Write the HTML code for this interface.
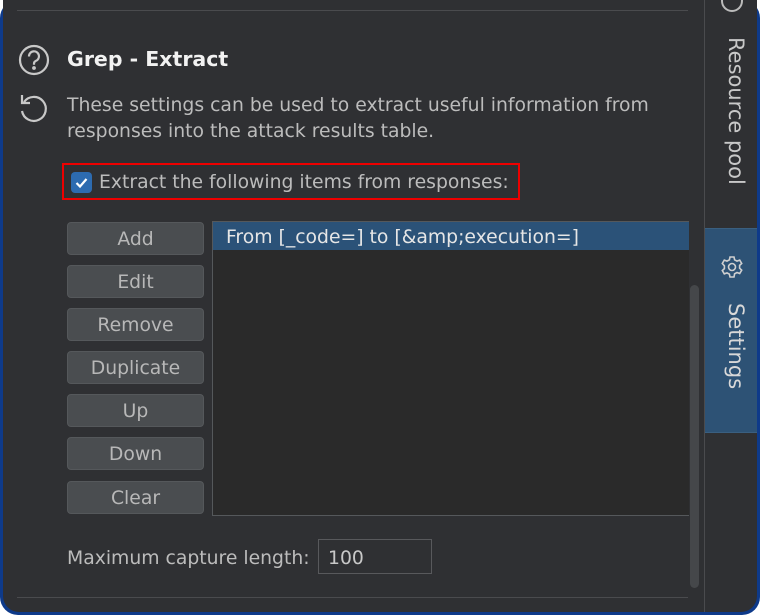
<!DOCTYPE html>
<html><head><style>
*{margin:0;padding:0;box-sizing:border-box}
body{width:760px;height:615px;background:#fff;overflow:hidden;font-family:"DejaVu Sans","Liberation Sans",sans-serif}
.frame{position:absolute;left:0;top:0;width:760px;height:615px;background:#0e3a8a;border-radius:18px}
.in{position:absolute;left:3px;top:0;width:754px;height:612px;background:#2f3033;border-radius:0 0 16px 16px;overflow:hidden}
.t{position:absolute;color:#bcbcbc;font-size:18.8px;white-space:nowrap}
.btn{position:absolute;left:64px;width:137px;height:33px;background:#4a4d50;border:1px solid #55585b;border-radius:4px;color:#b8b8b8;font-size:18.8px;text-align:center;line-height:33px}
</style></head><body>
<div class="frame"><div class="in">
<div style="position:absolute;left:14px;top:10px;width:671px;height:1px;background:#4a4b4e"></div>
<div style="position:absolute;left:14px;top:597px;width:671px;height:1px;background:#4a4b4e"></div>
<div style="position:absolute;left:701px;top:0;width:1px;height:612px;background:#4a4b4e"></div>
<div style="position:absolute;left:702px;top:228px;width:52px;height:205px;background:#2d5275;border-top:1px solid #3a5f80;border-bottom:1px solid #3a5f80"></div>
<div style="position:absolute;left:687px;top:285px;width:9px;height:303px;background:#45474a;border-radius:5px"></div>
<svg style="position:absolute;left:13px;top:43px" width="36" height="36" viewBox="0 0 36 36" fill="none" stroke="#c8c8c8" stroke-width="2.2"><circle cx="18" cy="17" r="14"/><path d="M13 13.5a5 5 0 1 1 6.5 4.6c-1.2.5-1.5 1.2-1.5 2.6v1"/><circle cx="18" cy="25" r="0.8" fill="#c8c8c8"/></svg>
<svg style="position:absolute;left:13px;top:91px" width="36" height="36" viewBox="0 0 36 36" fill="none" stroke="#c8c8c8" stroke-width="2.2"><path d="M8 11a12 12 0 1 1-2 9"/><path d="M6 4v8h8"/></svg>
<div class="t" style="left:64px;top:47px;color:#f2f2f2;font-weight:bold;font-size:20.5px">Grep - Extract</div>
<div class="t" style="left:64px;top:93px;line-height:26px">These settings can be used to extract useful information from<br>responses into the attack results table.</div>
<div style="position:absolute;left:59px;top:163px;width:458px;height:37px;border:2px solid #e00"></div>
<div style="position:absolute;left:68px;top:172px;width:21px;height:21px;background:#2d6bb0;border-radius:4px"></div>
<svg style="position:absolute;left:68px;top:172px" width="21" height="21" viewBox="0 0 21 21"><path d="M5.5 11l3.5 3.5 6.5-7.5" stroke="#fff" stroke-width="2.2" fill="none"/></svg>
<div class="t" style="left:96px;top:172px">Extract the following items from responses:</div>
<div style="position:absolute;left:209px;top:221px;width:477px;height:295px;background:#2a2a2a;border:1px solid #55585b;border-right:none"></div>
<div style="position:absolute;left:210px;top:222px;width:476px;height:28px;background:#2b5278"></div>
<div class="t" style="left:223px;top:227px;color:#e6e6e6">From [_code=] to [&amp;amp;execution=]</div>
<div class="btn" style="top:222px">Add</div>
<div class="btn" style="top:265px">Edit</div>
<div class="btn" style="top:308px">Remove</div>
<div class="btn" style="top:351px">Duplicate</div>
<div class="btn" style="top:394px">Up</div>
<div class="btn" style="top:437px">Down</div>
<div class="btn" style="top:481px">Clear</div>
<div class="t" style="left:64px;top:548px">Maximum capture length:</div>
<div style="position:absolute;left:315px;top:539px;width:114px;height:35px;background:#2f3033;border:1px solid #58595c"></div>
<div class="t" style="left:325px;top:548px;color:#c8c8c8">100</div>
<div class="t" style="transform-origin:0 0;transform:rotate(90deg);left:745px;top:37px;font-size:21px;color:#c8c8c8">Resource pool</div>
<svg style="position:absolute;left:717px;top:255px" width="24" height="24" viewBox="0 0 24 24" fill="none" stroke="#d0d0d0" stroke-width="1.6"><circle cx="12" cy="12" r="3.5"/><path d="M10 2h4l.6 2.8 2.4 1.3 2.7-1 2 3.4-2.1 1.9v2.8l2.1 1.9-2 3.4-2.7-1-2.4 1.3L14 22h-4l-.6-2.8-2.4-1.3-2.7 1-2-3.4 2.1-1.9v-2.8L2.3 8.5l2-3.4 2.7 1 2.4-1.3z"/></svg>
<div class="t" style="transform-origin:0 0;transform:rotate(90deg);left:745px;top:303px;font-size:21px;color:#d8d8d8">Settings</div>
<div style="position:absolute;left:718px;top:0;width:22px;height:12px;border:2px solid #bbb;border-top:none;border-radius:0 0 11px 11px"></div>
</div></div>
</body></html>
